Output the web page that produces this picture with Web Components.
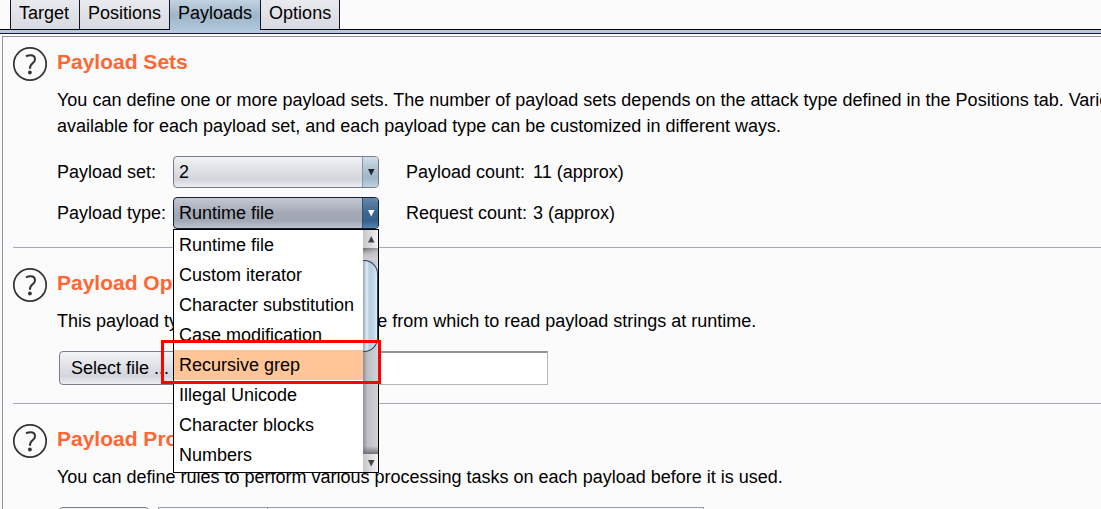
<!DOCTYPE html>
<html lang="en">
<head>
<meta charset="utf-8">
<title>Payloads</title>
<style>
html,body{margin:0;height:100%}
body{background:#fbfbfc;color:#000;font:18px/26px "Liberation Sans",Arial,sans-serif;overflow:hidden}
</style>
</head>
<body>
<payload-page></payload-page>
<script>
const define = (name, html, setup) => customElements.define(name, class extends HTMLElement {
  constructor() {
    super();
    const t = document.createElement('template');
    t.innerHTML = html;
    this.attachShadow({ mode: 'open' }).append(t.content.cloneNode(true));
  }
  connectedCallback() { if (setup) setup(this, this.shadowRoot); }
});

define('tab-strip', `<style>
:host{display:block;border-bottom:1px solid #14142a;background:#fbfbfc}
nav{display:flex;height:29px;padding-left:10px;border-bottom:1px solid #000}
.bar{height:3px;background:#b5cbdc}
</style><nav aria-label="Intruder"><slot></slot></nav><div class="bar"></div>`);

define('tab-item', `<style>
:host{display:block;flex:none;border-right:1px solid #14142a;background:linear-gradient(#e9eaee,#d8dae1)}
:host(:first-child){border-left:1px solid #14142a}
:host([active]){background:linear-gradient(#c3d3df,#9fb6ca 50%,#b0c6d9);margin-bottom:-1px}
a{display:block;box-sizing:border-box;min-width:68px;padding:0 8px;color:inherit;text-decoration:none}
</style><a href="#"><slot></slot></a>`);

define('help-section', `<style>
:host{display:block;padding:22px 0 18px;border-bottom:1px solid #a6a7b3}
:host([first]){padding-top:12px}
:host([last]){border-bottom:0}
.row{display:grid;grid-template-columns:34px 1fr;column-gap:10px}
svg{display:block;margin-top:-3px}
h2{margin:0 0 12px;font-size:21px;line-height:26px;color:#ff6633}
</style><div class="row">
<svg width="34" height="36" viewBox="0 0 34 36" fill="none" stroke="#333" role="img" aria-label="Help">
<circle cx="17" cy="18" r="16.2" stroke-width="1.7"/>
<path d="M13 10.2Q15.2 9.3 17.6 9.3Q22 9.3 22 13.2Q22 15.4 19.6 17.2Q16.9 19.3 16.9 22.7" stroke-width="2"/>
<circle cx="16.9" cy="26.5" r="1.9" fill="#333" stroke="none"/></svg>
<div><h2><slot name="title"></slot></h2><slot></slot></div></div>`);

define('help-text', `<style>
:host{display:block;margin-bottom:17px}
p{margin:0;white-space:nowrap}
</style><p><slot></slot></p>`);

define('drop-down', `<style>
:host{display:block;position:relative}
select{display:block;box-sizing:border-box;width:100%;height:32px;margin:0;padding:0 20px 0 5px;font:inherit;line-height:26px;color:#000;appearance:none;border:1px solid #777b86;border-radius:4px;background:linear-gradient(#f1f2f5,#dcdee4 50%,#d2d5db 75%,#eceef2);outline:0}
.arrow{position:absolute;top:1px;right:1px;bottom:1px;width:16px;box-sizing:border-box;border-left:1px solid #8299ac;border-radius:0 3px 3px 0;background:linear-gradient(#d2dee8,#a8bdcd 50%,#a1b7c8 70%,#bed2e2);display:grid;place-items:center;pointer-events:none;color:#222}
:host([open]) select{border-color:#16202e;background:linear-gradient(#c5c8d2,#a4a9b6 50%,#a1a7b4 75%,#bdc2ce)}
:host([open]) .arrow{background:linear-gradient(#6588aa,#3c668d 50%,#33618b 75%,#5784ab);border-color:#2f5273;color:#fff}
</style><select></select><span class="arrow"><svg width="8" height="8"><path d="M1 1H7.5L4.2 7.5Z" fill="currentColor"/></svg></span><slot></slot>`, (host, root) => {
  const s = root.querySelector('select');
  s.setAttribute('aria-label', host.getAttribute('label'));
  s.replaceChildren(new Option(host.getAttribute('value')));
});

define('option-popup', `<style>
:host{position:absolute;z-index:2;top:100%;left:0;right:0;box-sizing:border-box;border:1px solid #000;background:#fff;display:flex}
.list{flex:1;min-width:0;padding-bottom:2px}
.scroll{width:15px;display:flex;flex-direction:column;background:linear-gradient(90deg,#8f9095,#bfc0c6 30%,#d2d3d8)}
.end{height:18px;background:linear-gradient(90deg,#c5c6ca,#f1f1f4);display:grid;place-items:center;color:#444}
.gap{height:12px;background:linear-gradient(165deg,#6f7074,#bfc0c4 45%,#d2d3d8)}
.thumb{height:92px;box-sizing:border-box;border:1px solid #29435a;border-left:0;border-radius:0 14px 14px 0;background:linear-gradient(90deg,#8ca9be,#e2edf5 28%,#b5cee0 45%,#c3d9e8 80%,#e4eff6)}
.rest{flex:1;background:linear-gradient(transparent calc(100% - 8px),#707176)}
</style><div class="list" role="listbox"><slot></slot></div>
<div class="scroll"><div class="end"><svg width="8" height="8"><path d="M1 7.5H7.5L4.2 1Z" fill="currentColor"/></svg></div><div class="gap"></div><div class="thumb"></div><div class="rest"></div><div class="end"><svg width="8" height="8"><path d="M1 1H7.5L4.2 7.5Z" fill="currentColor"/></svg></div></div>`);

define('option-row', `<style>
:host{display:block;position:relative;height:30px;line-height:30px;padding-left:5px;white-space:nowrap}
:host([marked]){background:#ffc597}
.mark{display:none}
:host([marked]) .mark{display:block;position:absolute;z-index:3;top:-10px;left:-13px;right:-18px;bottom:-4px;border:3px solid #fe0000}
</style><slot></slot><span class="mark"></span>`, host => host.setAttribute('role', 'option'));

define('set-form', `<style>
:host{display:grid;grid-template-columns:116px 206px 154px 1fr;row-gap:9px;align-items:center}
.count{padding-left:27px}
</style>
<span>Payload set:</span><drop-down label="Payload set" value="2"></drop-down><span class="count">Payload count:</span><span>11 (approx)</span>
<span>Payload type:</span><drop-down label="Payload type" value="Runtime file" open><option-popup>
<option-row>Runtime file</option-row><option-row>Custom iterator</option-row><option-row>Character substitution</option-row><option-row>Case modification</option-row><option-row marked>Recursive grep</option-row><option-row>Illegal Unicode</option-row><option-row>Character blocks</option-row><option-row>Numbers</option-row>
</option-popup></drop-down><span class="count">Request count:</span><span>3 (approx)</span>`);

define('push-button', `<style>
:host{display:block}
button{display:block;box-sizing:border-box;width:100%;height:34px;margin:0;padding:0 11px;font:inherit;color:#000;text-align:left;white-space:nowrap;border:1px solid #7b7e88;border-radius:4px;background:linear-gradient(#f3f4f6,#dddfe5 50%,#d4d6dd 75%,#eceef2)}
</style><button type="button"><slot></slot></button>`, (host, root) => {
  if (host.hasAttribute('label')) root.querySelector('button').setAttribute('aria-label', host.getAttribute('label'));
});

define('file-row', `<style>
:host{display:grid;grid-template-columns:122px 359px;column-gap:8px;padding-left:2px}
input{box-sizing:border-box;width:100%;height:34px;margin:0;border:1px solid #b5b5b9;border-top:2px solid #929296;background:#fff;font:inherit}
</style><push-button>Select file ...</push-button><input type="text" aria-label="File path">`);

define('rule-row', `<style>
:host{display:grid;grid-template-columns:90px 546px;column-gap:9px;padding-left:2px}
table{width:100%;height:120px;table-layout:fixed;border-collapse:collapse;background:#f3f4f6}
th{border:1px solid #9a9ba8;padding:0}
th:first-child{width:108px}
</style><push-button label="Add"></push-button><table aria-label="Rules"><tr><th></th><th></th></tr></table>`);

define('payload-page', `<style>
:host{display:block}
main{margin:2px 0 0 2px;border:1px solid #8e8fa0;border-right:0;padding-left:10px}
</style>
<tab-strip><tab-item>Target</tab-item><tab-item>Positions</tab-item><tab-item active>Payloads</tab-item><tab-item>Options</tab-item></tab-strip>
<main>
<help-section first><span slot="title">Payload Sets</span>
<help-text>You can define one or more payload sets. The number of payload sets depends on the attack type defined in the Positions tab. Various payload types are<br>available for each payload set, and each payload type can be customized in different ways.</help-text>
<set-form></set-form></help-section>
<help-section><span slot="title">Payload Options [Runtime file]</span>
<help-text>This payload type lets you configure a file from which to read payload strings at runtime.</help-text>
<file-row></file-row></help-section>
<help-section last><span slot="title">Payload Processing</span>
<help-text>You can define rules to perform various processing tasks on each payload before it is used.</help-text>
<rule-row></rule-row></help-section>
</main>`);
</script>
</body>
</html>
